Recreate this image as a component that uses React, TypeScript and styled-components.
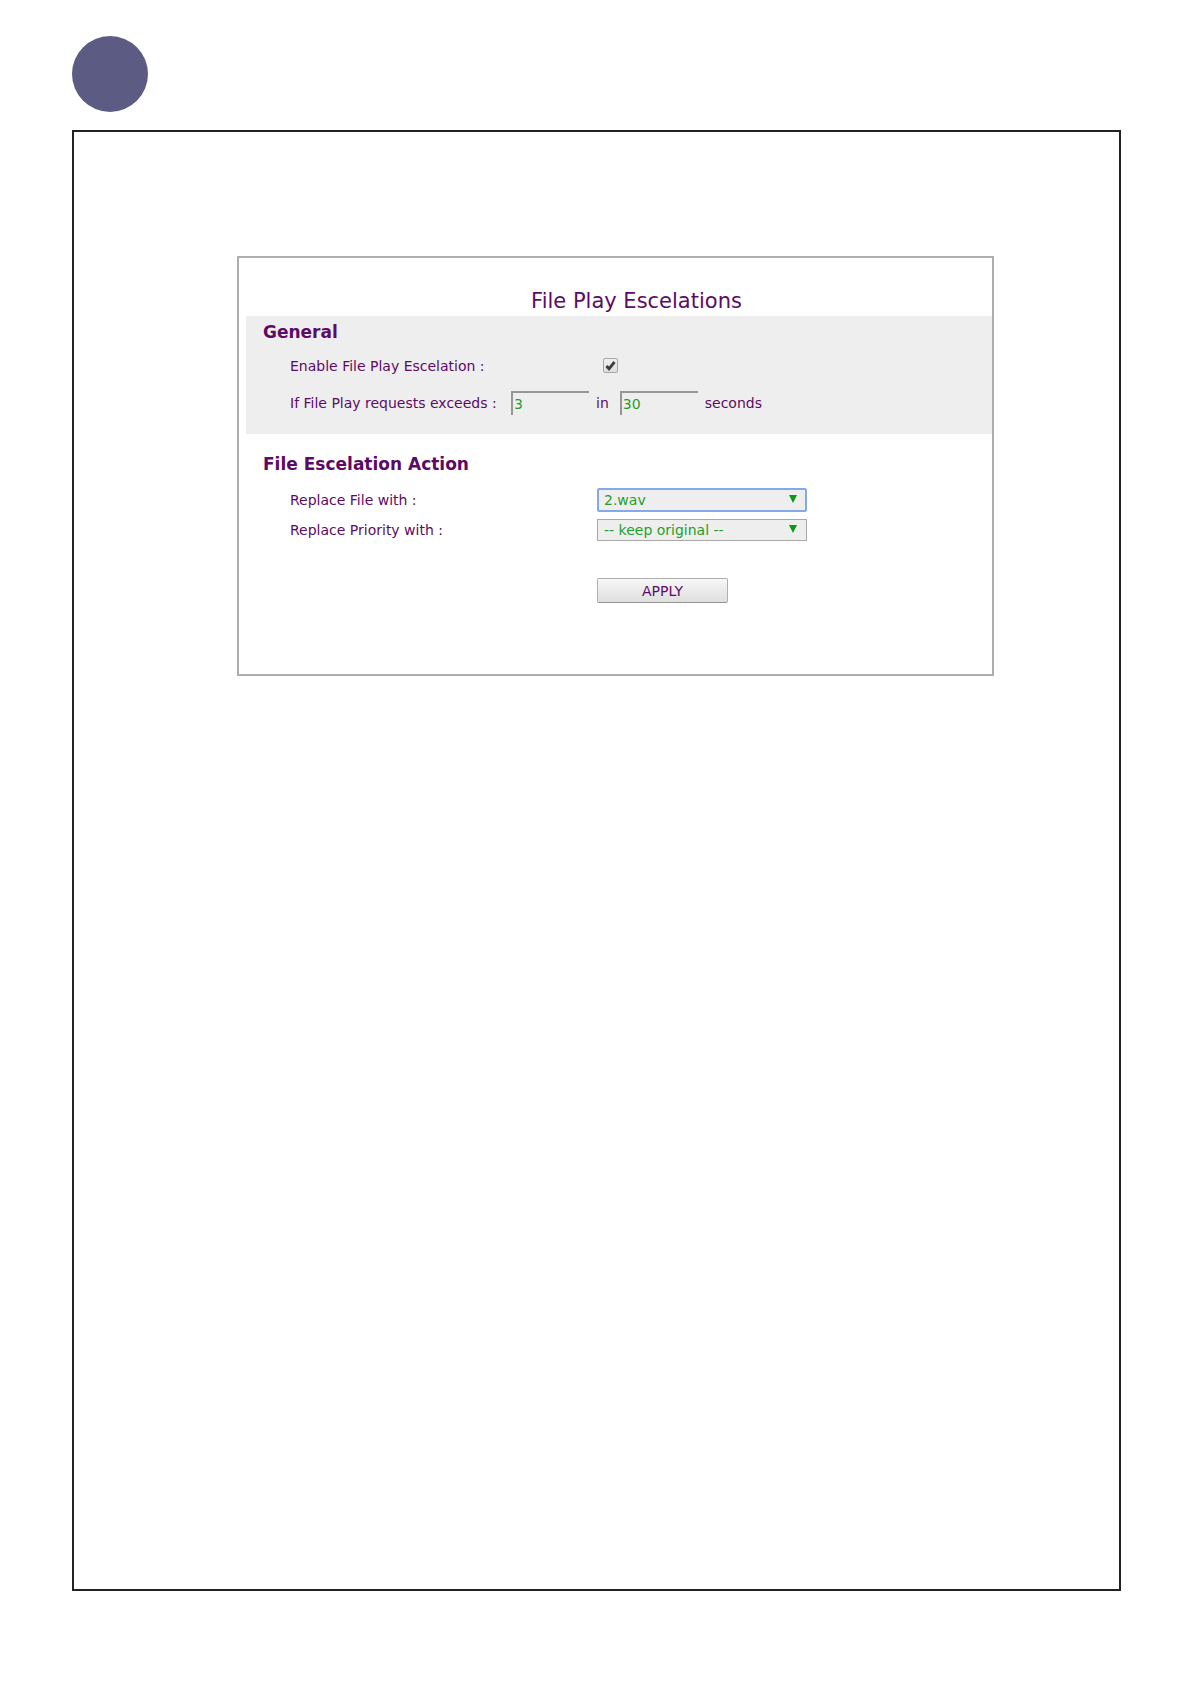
import React, { useState } from 'react';
import styled, { createGlobalStyle } from 'styled-components';

const GlobalStyle = createGlobalStyle`
  *, *::before, *::after { box-sizing: border-box; }
  body { margin: 0; background: #fff; }
`;

const sans = `'DejaVu Sans', Verdana, sans-serif`;
const purple = '#5d0a66';
const green = '#1f9e2c';

const Page = styled.div`
  display: flex;
  flex-direction: column;
  min-height: 100vh;
  padding: 36px 70px 93px 72px;
  font-family: ${sans};
  font-size: 14px;
  line-height: 20px;
  color: ${purple};
`;

const Badge = styled.div`
  width: 76px;
  height: 76px;
  margin-bottom: 18px;
  border-radius: 50%;
  background: #5c5b84;
`;

const Frame = styled.main`
  flex: 1;
  padding: 124px 125px 40px 163px;
  border: 2px solid #222224;
`;

const Panel = styled.form`
  padding: 30px 0 71px 7px;
  border: 2px solid #adadad;
`;

const Title = styled.h1`
  margin: 0;
  padding: 0 0 2px 35px;
  font-size: 21px;
  font-weight: 400;
  line-height: 26px;
  text-align: center;
`;

const Section = styled.section<{ $shaded?: boolean }>`
  padding: ${(p) => (p.$shaded ? '4px 0 8px 17px' : '18px 0 0 17px')};
  background: ${(p) => (p.$shaded ? '#eeeeee' : 'transparent')};
`;

const Heading = styled.h2`
  margin: 0 0 8px;
  font-size: 17px;
  font-weight: 700;
  line-height: 24px;
`;

const Row = styled.div<{ $height: number }>`
  display: grid;
  grid-template-columns: 307px 1fr;
  align-items: center;
  min-height: ${(p) => p.$height}px;
  padding-left: 27px;
`;

const InlineRow = styled.div`
  display: flex;
  align-items: center;
  min-height: 46px;
  padding-left: 27px;
`;

const LimitLabel = styled.label`
  width: 221px;
`;

const Unit = styled.label`
  padding: 0 11px 0 7px;
`;

const NumberBox = styled.input`
  width: 78px;
  height: 24px;
  padding: 0 1px;
  border: solid #969696;
  border-width: 2px 0 0 2px;
  background: #eeeeee;
  color: ${green};
  font: 14px ${sans};
  outline: none;
`;

const Stack = styled.span`
  display: inline-grid;
  justify-self: start;
  align-items: center;

  & > * { grid-area: 1 / 1; }
  & > svg { pointer-events: none; }
`;

const Tick = styled.input`
  appearance: none;
  width: 15px;
  height: 15px;
  margin: 0;
  border: 1px solid #a8a8a8;
  border-radius: 2px;
  background: linear-gradient(#f0f0f0, #dedede);
`;

const TickStack = styled(Stack)`
  margin: 0 0 2px 6px;
`;

const Picker = styled.select<{ $active?: boolean }>`
  appearance: none;
  width: 210px;
  height: ${(p) => (p.$active ? 24 : 22)}px;
  padding: 0 24px 0 ${(p) => (p.$active ? 5 : 6)}px;
  border: ${(p) => (p.$active ? '2px solid #83a9ea' : '1px solid #a9a9a9')};
  border-radius: ${(p) => (p.$active ? 2 : 0)}px;
  background: #eeeeee;
  color: ${green};
  font: 14px ${sans};
  outline: none;
`;

const Arrow = styled.svg`
  justify-self: end;
  width: 8px;
  height: 8px;
  margin: 0 10px 2px 0;
  fill: #0b9a12;
`;

const Actions = styled.div`
  padding: 34px 0 0 351px;
`;

const ApplyButton = styled.button`
  display: block;
  width: 131px;
  height: 25px;
  padding: 0;
  border: 1px solid #b0b0b0;
  border-bottom-color: #949494;
  border-radius: 2px;
  background: linear-gradient(#f7f7f7, #dfdfdf);
  color: ${purple};
  font: 14px ${sans};
`;

interface DropDownProps {
  id: string;
  options: string[];
  active?: boolean;
}

function DropDown({ id, options, active }: DropDownProps) {
  return (
    <Stack>
      <Picker id={id} $active={active}>
        {options.map((option) => (
          <option key={option}>{option}</option>
        ))}
      </Picker>
      <Arrow viewBox="0 0 8 8" aria-hidden="true">
        <path d="M0 0H8L4 8Z" />
      </Arrow>
    </Stack>
  );
}

export default function App() {
  const [enabled, setEnabled] = useState(true);

  return (
    <>
      <GlobalStyle />
      <Page>
        <Badge />
        <Frame>
          <Panel onSubmit={(e) => e.preventDefault()}>
            <Title>File Play Escelations</Title>
            <Section $shaded>
              <Heading>General</Heading>
              <Row $height={28}>
                <label htmlFor="enable">Enable File Play Escelation :</label>
                <TickStack>
                  <Tick
                    id="enable"
                    type="checkbox"
                    checked={enabled}
                    onChange={(e) => setEnabled(e.target.checked)}
                  />
                  {enabled && (
                    <svg width="15" height="15" viewBox="0 0 15 15" aria-hidden="true">
                      <path d="M3.5 8L6 10.8L11.5 4" fill="none" stroke="#3c3c3c" strokeWidth="2.8" />
                    </svg>
                  )}
                </TickStack>
              </Row>
              <InlineRow>
                <LimitLabel htmlFor="count">If File Play requests exceeds :</LimitLabel>
                <NumberBox id="count" type="text" defaultValue="3" />
                <Unit htmlFor="period">in</Unit>
                <NumberBox id="period" type="text" defaultValue="30" />
                <Unit htmlFor="period">seconds</Unit>
              </InlineRow>
            </Section>
            <Section>
              <Heading>File Escelation Action</Heading>
              <Row $height={32}>
                <label htmlFor="file">Replace File with :</label>
                <DropDown id="file" options={['2.wav']} active />
              </Row>
              <Row $height={28}>
                <label htmlFor="priority">Replace Priority with :</label>
                <DropDown id="priority" options={['-- keep original --']} />
              </Row>
            </Section>
            <Actions>
              <ApplyButton type="submit">APPLY</ApplyButton>
            </Actions>
          </Panel>
        </Frame>
      </Page>
    </>
  );
}
